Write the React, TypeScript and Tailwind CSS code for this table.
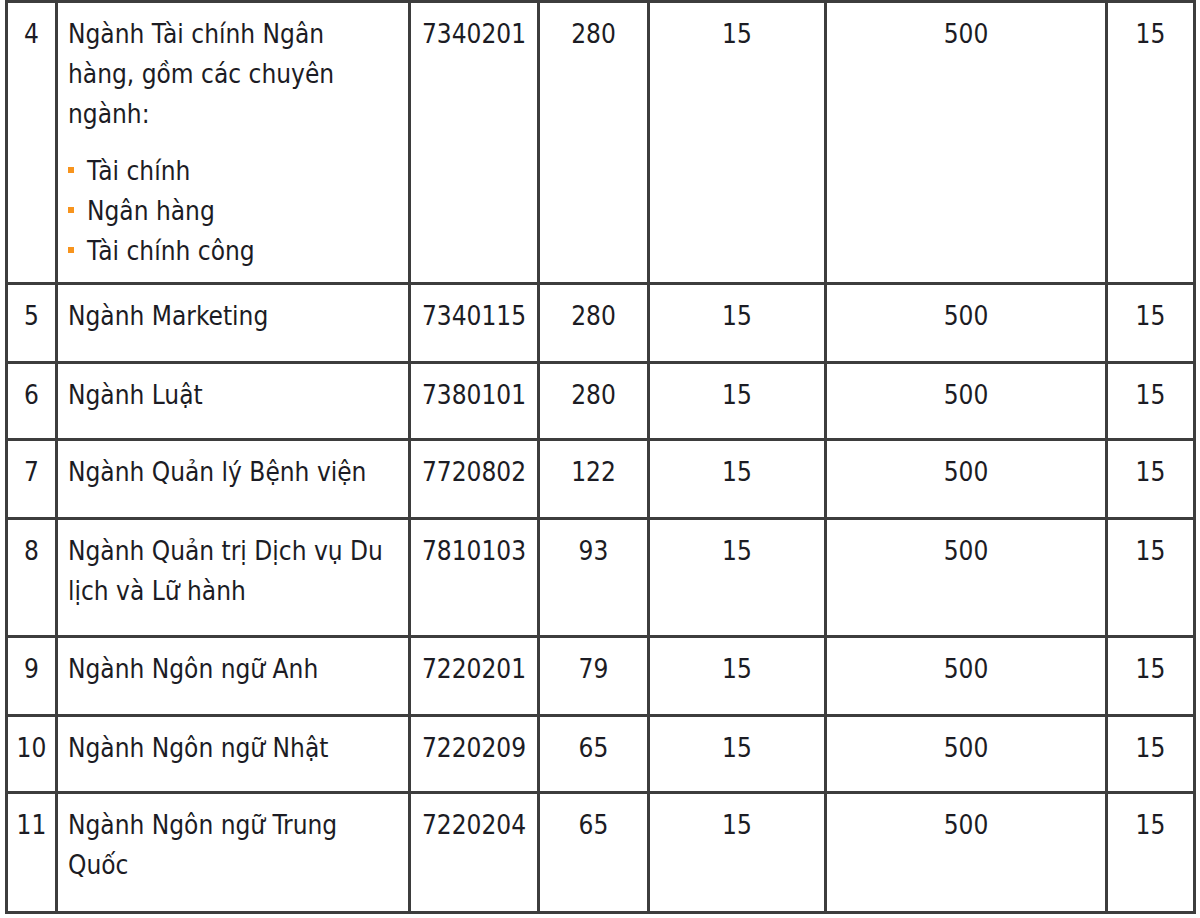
const rows = [
  { stt: '4', name: 'Ngành Tài chính Ngân hàng, gồm các chuyên ngành:', code: '7340201', quota: '280', list: ['Tài chính', 'Ngân hàng', 'Tài chính công'], pb: 'mb-[17px]' },
  { stt: '5', name: 'Ngành Marketing', code: '7340115', quota: '280', pb: 'mb-[25px]' },
  { stt: '6', name: 'Ngành Luật', code: '7380101', quota: '280', pb: 'mb-[23px]' },
  { stt: '7', name: 'Ngành Quản lý Bệnh viện', code: '7720802', quota: '122', pb: 'mb-[25px]' },
  { stt: '8', name: 'Ngành Quản trị Dịch vụ Du lịch và Lữ hành', code: '7810103', quota: '93', pb: 'mb-[24px]' },
  { stt: '9', name: 'Ngành Ngôn ngữ Anh', code: '7220201', quota: '79', pb: 'mb-[25px]' },
  { stt: '10', name: 'Ngành Ngôn ngữ Nhật', code: '7220209', quota: '65', pb: 'mb-[23px]' },
  { stt: '11', name: 'Ngành Ngôn ngữ Trung Quốc', code: '7220204', quota: '65', pb: 'mb-[26px]' },
];

const cell = 'border-[3px] border-[#3d3d3d] align-top pt-[11px] text-center';

export default function App() {
  return (
    <div className="min-h-[918px] bg-white pl-[5px] font-['DejaVu_Sans_Condensed','DejaVu_Sans',sans-serif] font-stretch-condensed text-[26px] leading-[40px] text-[#1c1c24]">
      <table className="table-fixed border-collapse w-[1191px]">
        <colgroup>
          <col className="w-[50px]" />
          <col className="w-[353px]" />
          <col className="w-[129px]" />
          <col className="w-[110px]" />
          <col className="w-[177px]" />
          <col className="w-[281px]" />
          <col className="w-[88px]" />
        </colgroup>
        <tbody>
          {rows.map((r) => (
            <tr key={r.stt}>
              <td className={cell}>{r.stt}</td>
              <td className="border-[3px] border-[#3d3d3d] align-top pt-[11px] pl-[10px] pr-[20px] text-left">
                <p className={r.pb}>{r.name}</p>
                {r.list && (
                  <ul className="mb-[11px]">
                    {r.list.map((item) => (
                      <li key={item} className="flex items-center">
                        <span className="w-[6px] h-[6px] bg-[#f7941d] mr-[13px] -mt-[2px]" />
                        {item}
                      </li>
                    ))}
                  </ul>
                )}
              </td>
              <td className={cell}>{r.code}</td>
              <td className={cell}>{r.quota}</td>
              <td className={cell}>15</td>
              <td className={cell}>500</td>
              <td className={cell}>15</td>
            </tr>
          ))}
        </tbody>
      </table>
    </div>
  );
}
